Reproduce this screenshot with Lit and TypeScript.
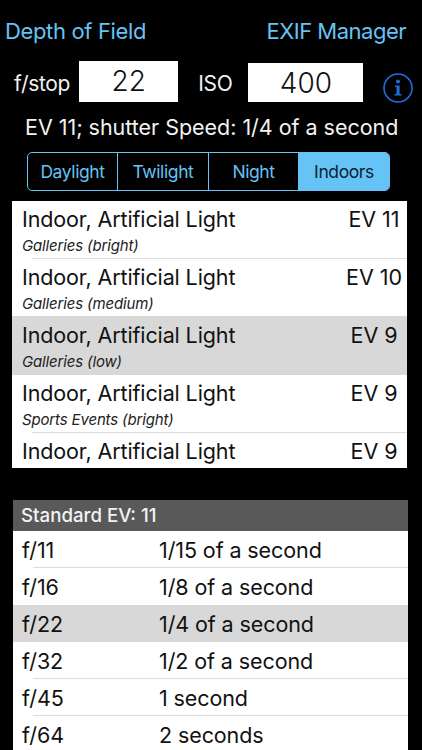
import { LitElement, html, css } from "lit";
import { customElement } from "lit/decorators.js";

const scenes = [
  { t: "Indoor, Artificial Light", s: "Galleries (bright)", ev: "EV 11", w: 58, sep: true },
  { t: "Indoor, Artificial Light", s: "Galleries (medium)", ev: "EV 10", w: 58, sep: false },
  { t: "Indoor, Artificial Light", s: "Galleries (low)", ev: "EV 9", w: 58, sep: false, sel: true },
  { t: "Indoor, Artificial Light", s: "Sports Events (bright)", ev: "EV 9", w: 58, sep: true },
  { t: "Indoor, Artificial Light", s: "", ev: "EV 9", w: 35, sep: false },
];
const stops = [
  { f: "f/11", v: "1/15 of a second", sep: true },
  { f: "f/16", v: "1/8 of a second", sep: false },
  { f: "f/22", v: "1/4 of a second", sep: false, sel: true },
  { f: "f/32", v: "1/2 of a second", sep: true },
  { f: "f/45", v: "1 second", sep: true },
  { f: "f/64", v: "2 seconds", sep: false },
];

@customElement("app-root")
export class AppRoot extends LitElement {
  static styles = css`
    :host {
      display: block;
      width: 422px;
      height: 750px;
      overflow: hidden;
      background: #000;
      font-family: Inter, "Liberation Sans", sans-serif;
      color: #fff;
    }
    .top {
      display: flex;
      justify-content: space-between;
      padding: 16px 16px 0 5px;
      height: 45px;
      box-sizing: border-box;
      font-size: 22px;
      line-height: 30px;
      color: #66c3f5;
      letter-spacing: -0.35px;
    }
    .exif { letter-spacing: -0.5px; }
    .inputs {
      display: flex;
      align-items: flex-end;
      height: 41px;
      margin-top: 16px;
      padding-left: 14px;
    }
    .lbl { font-size: 21px; line-height: 36px; color: #f2f2f2; letter-spacing: -0.3px; }
    .box {
      background: #fff;
      color: #111;
      text-align: center;
      font-size: 28px;
      font-weight: 300;
      box-sizing: border-box;
    }
    .b1 { width: 99px; height: 41px; line-height: 41px; margin-left: 9px; margin-right: 20px; }
    .b2 { width: 115px; height: 39px; line-height: 40px; margin-left: 16px; }
    .info { width: 32px; height: 32px; margin-left: 19px; margin-bottom: -2px; display: block; }
    .ev {
      margin-top: 9px;
      height: 33px;
      line-height: 33px;
      padding-left: 25px;
      font-size: 21.5px;
      color: #f2f2f2;
      letter-spacing: -0.03px;
      white-space: nowrap;
    }
    .seg {
      margin: 8px 0 0 27px;
      width: 363px;
      height: 39px;
      box-sizing: border-box;
      border: 1.5px solid #66c3f5;
      border-radius: 5px;
      display: grid;
      grid-template-columns: 90px 91px 90px 1fr;
      overflow: hidden;
      font-size: 17.5px;
      color: #66c3f5;
      letter-spacing: -0.4px;
    }
    .seg div {
      display: flex;
      align-items: center;
      justify-content: center;
      border-right: 1.5px solid #66c3f5;
    }
    .seg div.on { background: #66c3f5; color: #0c2433; border-right: 0; }
    .scenes {
      margin: 10px 0 0 12px;
      width: 395px;
      height: 267px;
      background: #fff;
      color: #111;
      overflow: hidden;
    }
    .scene {
      position: relative;
      box-sizing: border-box;
      padding-left: 10px;
      display: grid;
      grid-template-columns: 1fr 66px;
    }
    .sel { background: #d8d8d8; }
    .scene.sel { margin-top: -1px; padding-top: 1px; }
    .scene.sel + .scene { margin-top: 1px; margin-top: 0; }
    .sep::after {
      content: "";
      position: absolute;
      left: 20px;
      right: 0;
      bottom: 0;
      height: 1px;
      background: #dcdcdc;
    }
    .t { font-size: 21.5px; line-height: 36px; letter-spacing: -0.12px; white-space: nowrap; }
    .s { font-size: 15px; line-height: 18px; font-style: italic; color: #222; letter-spacing: -0.15px; white-space: nowrap; }
    .evv { font-size: 21.5px; line-height: 36px; text-align: center; letter-spacing: -0.05px; white-space: nowrap; }
    .std {
      margin: 32px 0 0 13px;
      width: 395px;
      background: #fff;
      color: #111;
    }
    .head {
      height: 31px;
      line-height: 31px;
      padding-left: 8px;
      background: #595959;
      color: #f2f2f2;
      font-size: 18.7px;
      font-weight: 500;
    }
    .row {
      position: relative;
      height: 37px;
      line-height: 39px;
      display: grid;
      grid-template-columns: 137px 1fr;
      padding-left: 9px;
      font-size: 21.5px;
      letter-spacing: -0.1px;
    }
  `;

  render() {
    return html`
      <div class="top"><span>Depth of Field</span><span class="exif">EXIF Manager</span></div>
      <div class="inputs">
        <span class="lbl">f/stop</span>
        <div class="box b1">22</div>
        <span class="lbl">ISO</span>
        <div class="box b2">400</div>
        <svg class="info" viewBox="0 0 32 32" fill="none">
          <circle cx="16" cy="16" r="14" stroke="#1a70d8" stroke-width="1.6" />
          <circle cx="16" cy="9.5" r="2" fill="#1a70d8" />
          <path d="M13 13.500h4.600V22H19.500v1.600h-7V22h2V15h-1.500z" fill="#1a70d8" />
        </svg>
      </div>
      <div class="ev">EV 11; shutter Speed: 1/4 of a second</div>
      <div class="seg">
        <div>Daylight</div><div>Twilight</div><div>Night</div><div class="on">Indoors</div>
      </div>
      <div class="scenes">
        ${scenes.map(
          (r) => html`<div class="scene ${r.sep ? "sep" : ""} ${r.sel ? "sel" : ""}" style="height:${r.w + (r.sel ? 1 : 0)}px">
            <div><div class="t">${r.t}</div><div class="s">${r.s}</div></div>
            <div class="evv">${r.ev}</div>
          </div>`
        )}
      </div>
      <div class="std">
        <div class="head">Standard EV: 11</div>
        ${stops.map(
          (r) => html`<div class="row ${r.sep ? "sep" : ""} ${r.sel ? "sel" : ""}"><span>${r.f}</span><span>${r.v}</span></div>`
        )}
      </div>
    `;
  }
}
